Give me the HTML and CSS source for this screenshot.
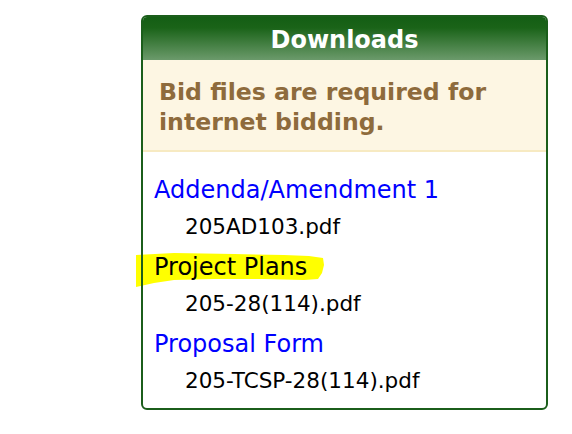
FILE: index.html
```html
<!DOCTYPE html>
<html>
<head>
<meta charset="utf-8">
<link rel="stylesheet" href="styles.css">
</head>
<body>
<div class="box">
  <div class="head">Downloads</div>
  <div class="notice">Bid files are required for internet bidding.</div>
  <div class="list">
    <div class="group">
      <a class="title link" href="#">Addenda/Amendment 1</a>
      <div class="file">205AD103.pdf</div>
    </div>
    <div class="group">
      <div class="title marked">
        <svg class="hl" width="200" height="40" viewBox="0 0 200 40">
          <polygon fill="#ffff00" points="2,6 40,4 100,5 150,6 175,7 189,9 190,16 188,24 184,30 170,31 130,30 80,30 40,31 20,34 2,38"/>
          <rect x="7" y="0" width="2" height="40" fill="#1b5e1b"/>
        </svg>
        <span class="txt">Project Plans</span>
      </div>
      <div class="file">205-28(114).pdf</div>
    </div>
    <div class="group">
      <a class="title link" href="#">Proposal Form</a>
      <div class="file">205-TCSP-28(114).pdf</div>
    </div>
  </div>
</div>
</body>
</html>
```
FILE: styles.css
```css
html, body { margin: 0; padding: 0; background: #fff; }
body { font-family: "DejaVu Sans", Verdana, sans-serif; }
.box {
  margin: 15px 0 0 141px;
  width: 403px;
  border: 2px solid #1b5e1b;
  border-radius: 6px;
  overflow: visible;
  background: #fff;
}
.head {
  height: 43px;
  background: linear-gradient(#145e14 0%, #1a6318 25%, #6b9a6b 100%);
  color: #fff;
  font-weight: bold;
  font-size: 24px;
  line-height: 46px;
  text-align: center;
  border-radius: 4px 4px 0 0;
}
.notice {
  background: #fdf6e3;
  border-bottom: 2px solid #f7eac2;
  color: #8e6b3c;
  font-weight: bold;
  font-size: 23.6px;
  line-height: 30px;
  padding: 17px 12px 13px 16px;
}
.list { padding: 17px 11px 8px 11px; }
.group { display: flex; flex-direction: column; }
.title { font-size: 24px; line-height: 36px; height: 36px; padding-top: 3px; display: block; text-decoration: none; }
.link { color: #0000ff; }
.marked { position: relative; color: #000; }
.marked .txt { position: relative; }
.hl { position: absolute; left: -20px; top: 3px; }
.file { font-size: 21.5px; line-height: 38px; padding-left: 31px; color: #000; }
```
